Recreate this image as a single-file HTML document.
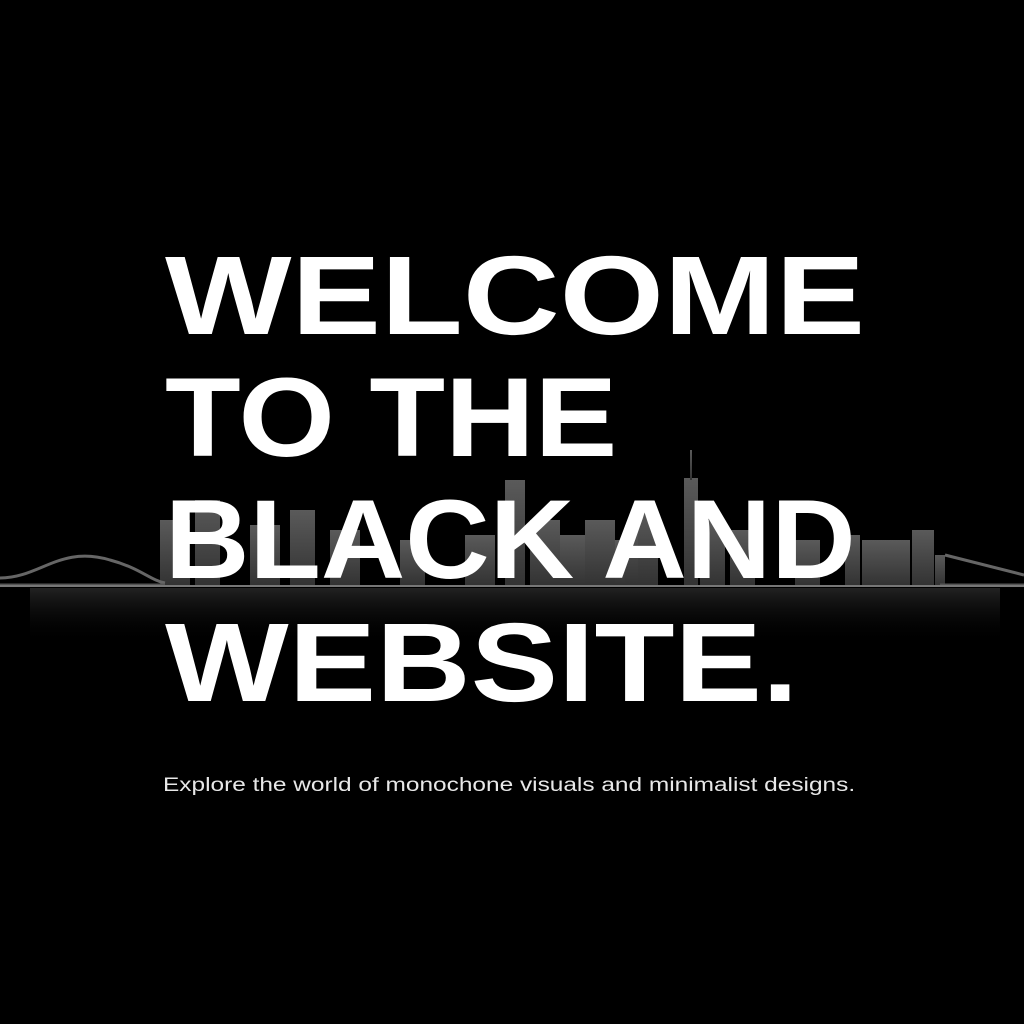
<!DOCTYPE html>
<html><head><meta charset="utf-8"><style>
html,body{margin:0;padding:0;background:#000;width:1024px;height:1024px;overflow:hidden;position:relative}
.l{position:absolute;left:165px;font-family:"Liberation Sans",sans-serif;font-weight:bold;font-size:112px;line-height:112px;color:#fff;white-space:nowrap;transform-origin:0 0}
.s{position:absolute;left:163px;top:775px;font-family:"Liberation Sans",sans-serif;font-size:19px;line-height:22px;color:#e8e8e8;white-space:nowrap;transform-origin:0 0;transform:scaleX(1.285)}
svg{position:absolute;left:0;top:0}
</style></head><body>
<svg width="1024" height="1024">
<defs><linearGradient id="r" x1="0" y1="0" x2="0" y2="1"><stop offset="0" stop-color="#444" stop-opacity=".5"/><stop offset="1" stop-color="#000" stop-opacity="0"/></linearGradient>
<linearGradient id="b" x1="0" y1="0" x2="0" y2="1"><stop offset="0" stop-color="#5a5a5a"/><stop offset="1" stop-color="#333"/></linearGradient></defs>
<g fill="url(#b)">
<rect x="160" y="520" width="30" height="65"/><rect x="195" y="500" width="25" height="85"/><rect x="250" y="525" width="30" height="60"/>
<rect x="290" y="510" width="25" height="75"/><rect x="330" y="530" width="30" height="55"/><rect x="400" y="540" width="25" height="45"/>
<rect x="465" y="535" width="30" height="50"/><rect x="505" y="480" width="20" height="105"/><rect x="530" y="520" width="30" height="65"/>
<rect x="560" y="535" width="25" height="50"/><rect x="585" y="520" width="30" height="65"/><rect x="615" y="540" width="25" height="45"/>
<rect x="625" y="525" width="25" height="60"/><rect x="638" y="510" width="20" height="75"/><rect x="684" y="478" width="14" height="107"/>
<rect x="690" y="450" width="2" height="30"/><rect x="700" y="520" width="25" height="65"/><rect x="730" y="530" width="25" height="55"/>
<rect x="795" y="540" width="25" height="45"/><rect x="845" y="535" width="15" height="50"/><rect x="862" y="540" width="20" height="45"/>
<rect x="880" y="540" width="30" height="45"/><rect x="912" y="530" width="22" height="55"/><rect x="935" y="555" width="10" height="30"/>
</g>
<path d="M0 578 C40 578 60 545 110 560 C140 568 150 580 165 583" stroke="#666" stroke-width="3" fill="none"/>
<path d="M0 585 L165 585" stroke="#555" stroke-width="3"/>
<path d="M945 555 L1024 575" stroke="#666" stroke-width="3" fill="none"/>
<path d="M940 585 L1024 585" stroke="#555" stroke-width="3"/>
<rect x="0" y="585" width="1024" height="2" fill="#777"/>
<rect x="30" y="588" width="970" height="55" fill="url(#r)"/>
</svg>
<div class="l" style="top:240px;transform:scaleX(1.197)">WELCOME</div>
<div class="l" style="top:362px;transform:scaleX(1.107)">TO THE</div>
<div class="l" style="top:484px;transform:scaleX(1.044)">BLACK AND</div>
<div class="l" style="top:607px;transform:scaleX(1.17)">WEBSITE.</div>
<div class="s">Explore the world of monochone visuals and minimalist designs.</div>
</body></html>
